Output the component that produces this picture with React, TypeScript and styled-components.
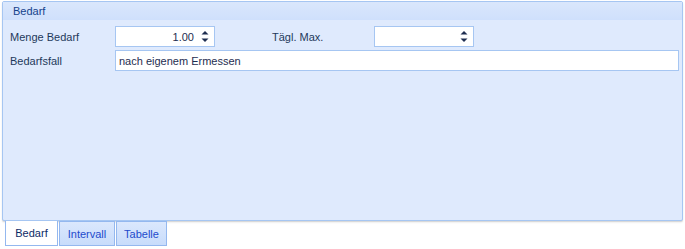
import React from "react";
import styled, { createGlobalStyle } from "styled-components";

const Global = createGlobalStyle`
  html, body { margin: 0; padding: 0; background: #ffffff; }
  body { font-family: "Liberation Sans", Arial, sans-serif; font-size: 11px; color: #1e395b; }
`;

const Page = styled.div`
  width: 685px;
  height: 249px;
  padding: 1px 2px 0 2px;
  box-sizing: border-box;
  display: flex;
  flex-direction: column;
`;

const Panel = styled.div`
  height: 220px;
  box-sizing: border-box;
  border: 1px solid #a6c6f2;
  border-radius: 2px;
  background: #dfeafd;
  box-shadow: 0 1px 1px rgba(0, 0, 0, 0.12), 0 2px 2px rgba(0, 0, 0, 0.05);
  display: flex;
  flex-direction: column;
`;

const Header = styled.div`
  height: 18px;
  background: linear-gradient(#dae7fc, #cfe0fc);
  padding-left: 10px;
  display: flex;
  align-items: center;
  color: #15428b;
  font-size: 11px;
`;

const Body = styled.div`
  padding: 6px 3px 0 7px;
  display: flex;
  flex-direction: column;
  gap: 3px;
`;

const Row = styled.div`
  display: flex;
  align-items: center;
  height: 21px;
`;

const Label = styled.div<{ $w: number }>`
  width: ${(p) => p.$w}px;
  flex: none;
  color: #1e395b;
`;

const Spin = styled.div`
  width: 100px;
  height: 21px;
  box-sizing: border-box;
  border: 1px solid #a6c6f2;
  background: #fff;
  display: flex;
  align-items: center;
  flex: none;
`;

const SpinValue = styled.div`
  flex: 1;
  text-align: right;
  padding-right: 5px;
  color: #1e2d50;
`;

const SpinButtons = styled.div`
  width: 12px;
  display: flex;
  align-items: center;
  justify-content: center;
  margin-right: 3px;
`;

const TextBox = styled.div`
  flex: 1;
  height: 21px;
  box-sizing: border-box;
  border: 1px solid #a6c6f2;
  background: #fff;
  display: flex;
  align-items: center;
  padding-left: 3px;
  color: #1e2d50;
`;

const Gap = styled.div<{ $w: number }>`
  width: ${(p) => p.$w}px;
  flex: none;
`;

const Tabs = styled.div`
  display: flex;
  padding-left: 3px;
`;

const Tab = styled.div<{ $active?: boolean; $w: number }>`
  height: 25px;
  width: ${(p) => p.$w}px;
  box-sizing: border-box;
  display: flex;
  align-items: center;
  justify-content: center;
  font-size: 11px;
  border: 1px solid #94b8ef;
  border-top: ${(p) => (p.$active ? "none" : "1px solid #94b8ef")};
  margin-right: 1px;
  color: ${(p) => (p.$active ? "#0c2a66" : "#1d4bcc")};
  background: ${(p) =>
    p.$active ? "#ffffff" : "linear-gradient(#dbe8fd, #c8dcfb)"};
`;

const Arrows = () => (
  <svg width="8" height="13" viewBox="0 0 8 13">
    <path d="M4 1 L7.5 4.5 L0.5 4.5 Z" fill="#1e2d50" />
    <path d="M4 12 L7.5 8.5 L0.5 8.5 Z" fill="#1e2d50" />
  </svg>
);

export default function App() {
  return (
    <>
      <Global />
      <Page>
        <Panel>
          <Header>Bedarf</Header>
          <Body>
            <Row>
              <Label $w={105}>Menge Bedarf</Label>
              <Spin>
                <SpinValue>1.00</SpinValue>
                <SpinButtons>
                  <Arrows />
                </SpinButtons>
              </Spin>
              <Gap $w={57} />
              <Label $w={102}>Tägl. Max.</Label>
              <Spin>
                <SpinValue></SpinValue>
                <SpinButtons>
                  <Arrows />
                </SpinButtons>
              </Spin>
            </Row>
            <Row>
              <Label $w={105}>Bedarfsfall</Label>
              <TextBox>nach eigenem Ermessen</TextBox>
            </Row>
          </Body>
        </Panel>
        <Tabs>
          <Tab $active $w={53}>Bedarf</Tab>
          <Tab $w={56}>Intervall</Tab>
          <Tab $w={51}>Tabelle</Tab>
        </Tabs>
      </Page>
    </>
  );
}
